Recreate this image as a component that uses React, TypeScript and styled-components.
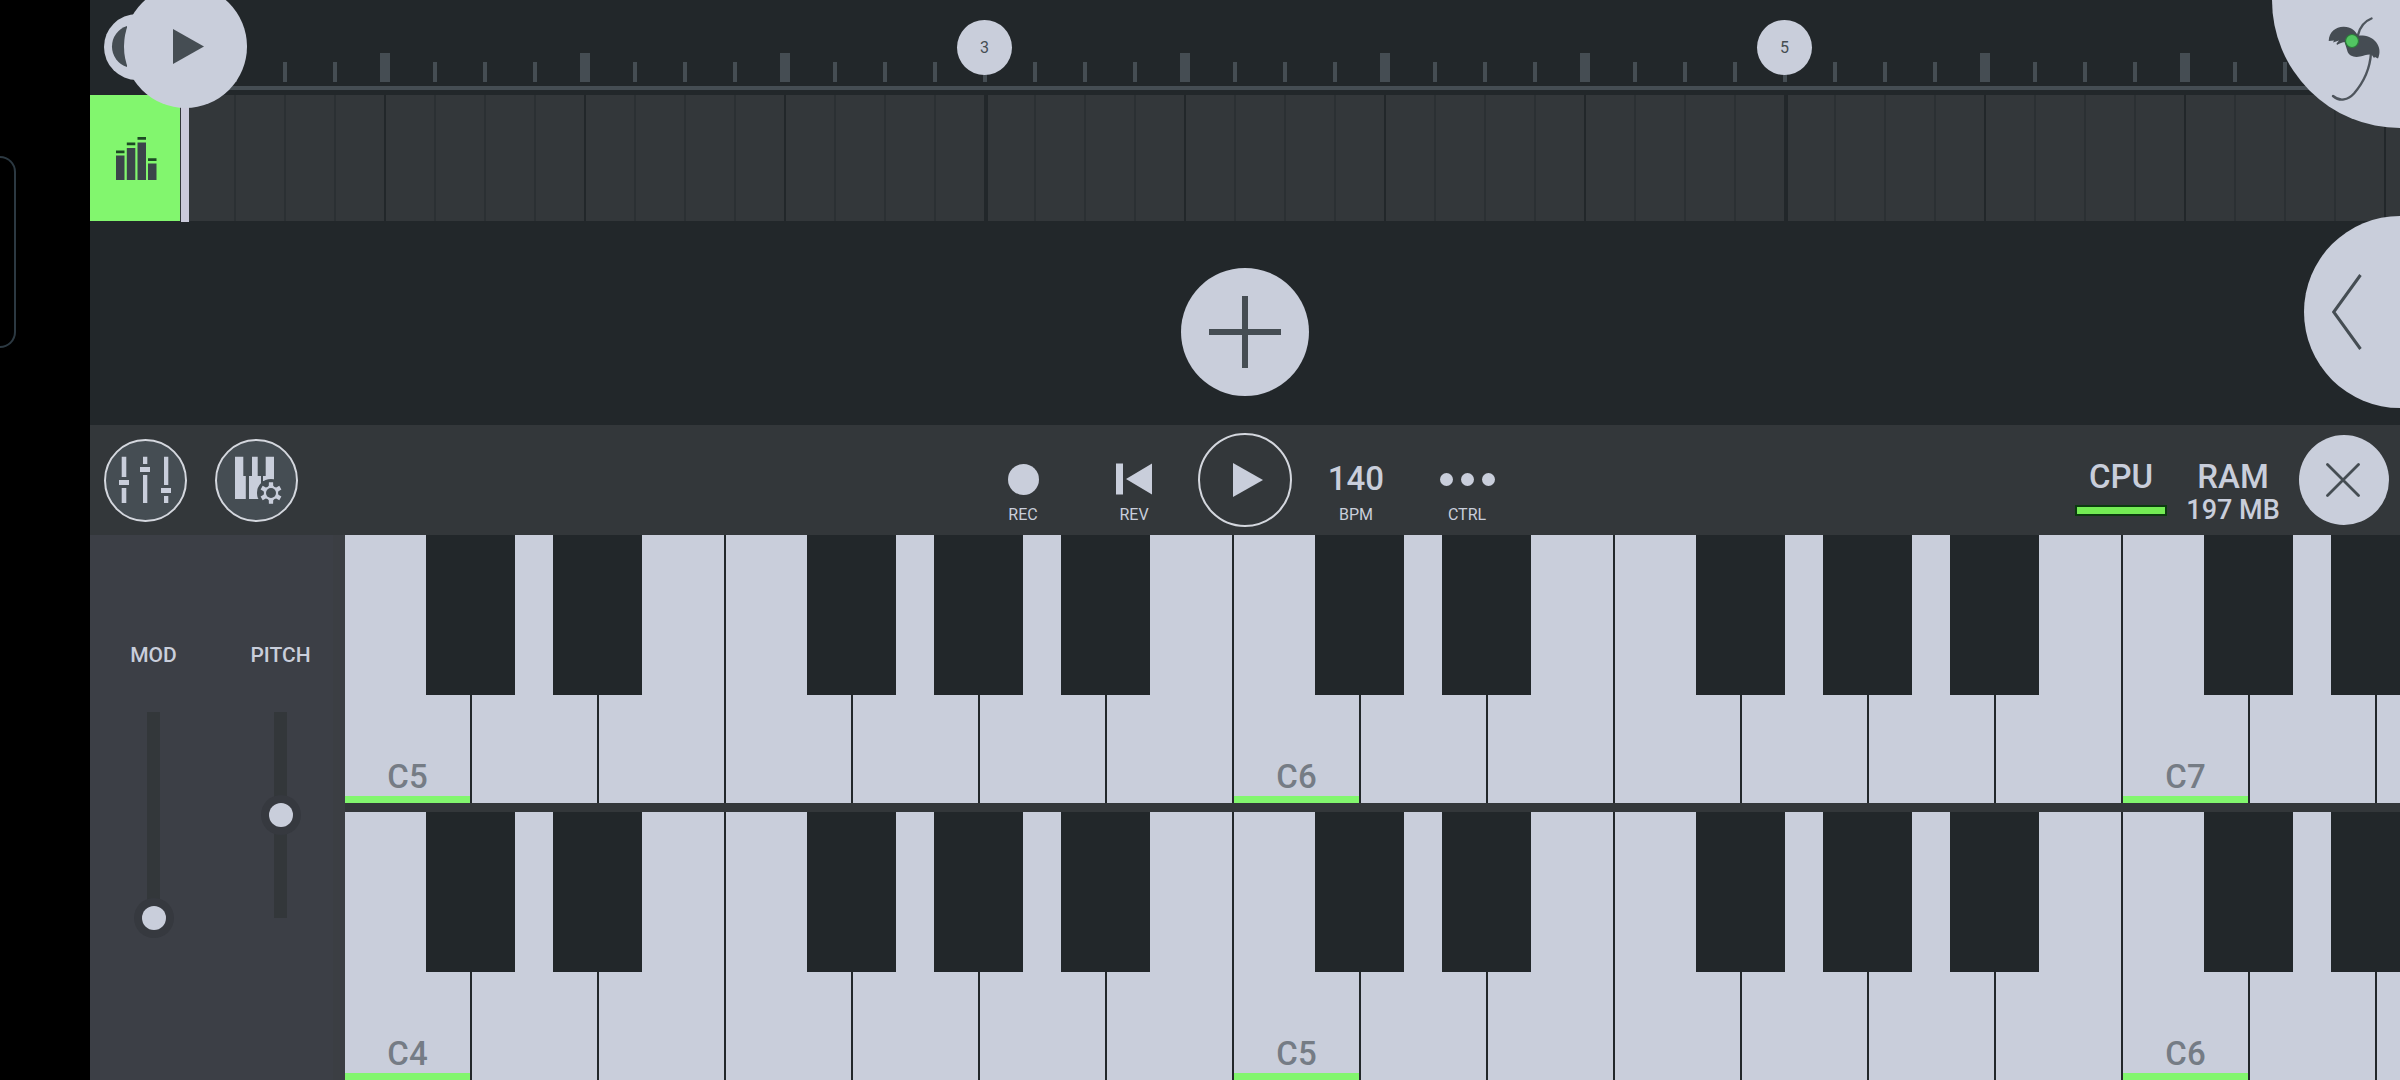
import React, { useState } from "react";
import styled, { createGlobalStyle, css } from "styled-components";

const color = {
  ink: "#22272a",
  surface: "#33373a",
  panel: "#3c3f46",
  light: "#c9cedb",
  steel: "#454d53",
  green: "#82f66e",
};

const GlobalStyle = createGlobalStyle`
  *, *::before, *::after { box-sizing: border-box; }
  body {
    margin: 0;
    background: #000;
    color: ${color.light};
    font-family: Roboto, "Noto Sans", sans-serif;
  }
  button {
    margin: 0;
    padding: 0;
    border: 0;
    background: none;
    color: inherit;
    font: inherit;
    cursor: pointer;
  }
  svg { display: block; }
`;

const Screen = styled.div`
  display: flex;
  min-height: 100vh;
  overflow: hidden;
`;

const Bezel = styled.aside`
  flex: none;
  width: 90px;
  padding-top: 156px;
  background: #000;
`;

const EdgeHandle = styled.div`
  width: 16px;
  height: 192px;
  border: 2px solid #2c3942;
  border-left: 0;
  border-radius: 0 16px 16px 0;
`;

const Workspace = styled.main`
  position: relative;
  display: flex;
  flex: 1;
  flex-direction: column;
  min-width: 0;
  overflow: hidden;
  background: ${color.ink};
`;

/* Timeline */

const Timeline = styled.section`
  position: relative;
`;

const Ruler = styled.div`
  display: flex;
  height: 90px;
  margin-bottom: 5px;
  margin-left: 95px;
  padding-bottom: 4px;
  border-bottom: 4px solid ${color.steel};
`;

const RulerStep = styled.div`
  position: relative;
  display: flex;
  flex: none;
  align-items: flex-end;
  width: 50px;
  margin-left: -2px;
  margin-right: 2px;
`;

const Tick = styled.span<{ $major: boolean }>`
  width: ${(p) => (p.$major ? 10 : 4)}px;
  height: ${(p) => (p.$major ? 29 : 20)}px;
  margin-left: ${(p) => (p.$major ? -3 : 0)}px;
  background: ${color.steel};
`;

const BarMarker = styled.button`
  position: absolute;
  top: 20px;
  left: -26px;
  width: 55px;
  height: 55px;
  border-radius: 50%;
  background: ${color.light};
  color: ${color.steel};
  font-size: 16px;
  line-height: 54px;
`;

const Track = styled.div`
  display: flex;
  height: 126px;
  overflow: hidden;
  background: ${color.surface};
`;

const TrackHead = styled.button`
  display: grid;
  flex: none;
  place-items: center;
  width: 90px;
  padding-left: 3px;
  background: ${color.green};
`;

const TrackSteps = styled.div`
  display: flex;
  padding-left: 4px;
`;

type LineKind = "bar" | "beat" | "step";

const TrackStep = styled.div<{ $kind: LineKind }>`
  flex: none;
  width: 50px;
  ${(p) =>
    p.$kind === "step"
      ? css`border-left: 2px solid #2b3033;`
      : css`border-left: ${p.$kind === "bar" ? 4 : 2}px solid ${color.ink};`}
`;

const Playhead = styled.div`
  position: absolute;
  top: 0;
  bottom: -1px;
  left: 91px;
  width: 8px;
  background: #cbcadb;
`;

const LoopButton = styled.button`
  position: absolute;
  top: 14px;
  left: 14px;
  width: 66px;
  height: 66px;
  border-radius: 50%;
  background: ${color.light};
`;

const PlayheadGrip = styled.button`
  position: absolute;
  top: -15px;
  left: 34px;
  display: grid;
  place-items: center;
  width: 123px;
  height: 123px;
  padding-left: 5px;
  border-radius: 50%;
  background: ${color.light};
`;

/* Floating corner controls */

const MenuCorner = styled.button`
  position: absolute;
  top: 0;
  right: 0;
  display: flex;
  justify-content: flex-end;
  width: 128px;
  height: 128px;
  padding: 15px 15px 0 0;
  border-bottom-left-radius: 100%;
  background: ${color.light};
`;

const DrawerTab = styled.button`
  position: absolute;
  top: 216px;
  right: 0;
  display: grid;
  place-items: center;
  width: 96px;
  height: 192px;
  padding-right: 10px;
  border-radius: 96px 0 0 96px;
  background: ${color.light};
`;

const EmptyLane = styled.section`
  display: flex;
  align-items: flex-start;
  justify-content: center;
  height: 204px;
  padding-top: 47px;
`;

const AddTrack = styled.button`
  display: grid;
  place-items: center;
  width: 128px;
  height: 128px;
  border-radius: 50%;
  background: ${color.light};
`;

/* Toolbar */

const Toolbar = styled.section`
  display: grid;
  grid-template-columns: 1fr auto 1fr;
  align-items: center;
  height: 110px;
  padding: 0 11px;
  background: ${color.surface};
`;

const ToolGroup = styled.div`
  display: flex;
  gap: 28px;
  padding-left: 3px;
`;

const RoundTool = styled.button`
  width: 83px;
  height: 83px;
  border: 2px solid #d4d7de;
  border-radius: 50%;
  background: ${color.steel};
`;

const Transport = styled.div`
  display: grid;
  grid-template-columns: repeat(5, 111px);
`;

const TransportButton = styled.button`
  display: flex;
  flex-direction: column;
  gap: 5px;
  align-items: center;
  height: 110px;
  padding-top: 33px;
  font-weight: 500;
`;

const TransportFace = styled.span`
  display: grid;
  place-items: center;
  height: 42px;
  font-size: 33px;
  line-height: 42px;
`;

const TransportLabel = styled.span`
  font-size: 16px;
  font-weight: 400;
  line-height: 20px;
`;

const PlayButton = styled.button`
  display: grid;
  place-items: center;
  place-self: center;
  width: 94px;
  height: 94px;
  padding-left: 5px;
  border: 2px solid #d4d7de;
  border-radius: 50%;
`;

const Status = styled.div`
  display: flex;
  align-items: center;
  justify-content: flex-end;
`;

const Stat = styled.div`
  display: flex;
  flex-direction: column;
  align-items: center;
  width: 112px;
  height: 110px;
  padding-top: 35px;
  font-weight: 500;
`;

const StatName = styled.span`
  font-size: 33px;
  line-height: 34px;
`;

const StatValue = styled.span`
  display: flex;
  align-items: center;
  height: 32px;
  font-size: 27px;
  line-height: 32px;
  white-space: nowrap;
`;

const LoadBar = styled.span`
  width: 92px;
  height: 11px;
  border: 2px solid #0c3a10;
  background: #74ec54;
`;

const CloseButton = styled.button`
  display: grid;
  place-items: center;
  width: 90px;
  height: 90px;
  margin-left: 10px;
  padding-right: 3px;
  border-radius: 50%;
  background: ${color.light};
`;

/* Instrument */

const Instrument = styled.section`
  display: flex;
  flex: 1;
  min-height: 0;
`;

const WheelPanel = styled.div`
  display: grid;
  flex: none;
  grid-template-columns: 127px 127px;
  width: 255px;
  padding-top: 107px;
  background: ${color.panel};
  box-shadow: inset -12px 0 #3b3e43;
`;

const Wheel = styled.div`
  display: flex;
  flex-direction: column;
  gap: 32px;
  align-items: center;
`;

const WheelLabel = styled.label`
  font-size: 21px;
  font-weight: 500;
  line-height: 26px;
`;

const WheelInput = styled.input`
  appearance: none;
  writing-mode: vertical-lr;
  direction: rtl;
  width: 24px;
  height: 230px;
  margin: 0;
  background: linear-gradient(${color.surface}, ${color.surface}) center / 13px 206px no-repeat;
  cursor: pointer;

  &::-webkit-slider-thumb {
    appearance: none;
    width: 24px;
    height: 24px;
    border-radius: 50%;
    background: ${color.light};
    box-shadow: 0 0 0 8px #36393f;
  }
`;

const Keyboards = styled.div`
  display: grid;
  flex: 1;
  grid-template-rows: 1fr 1fr;
  gap: 9px;
  min-width: 0;
  background: ${color.surface};
`;

const Keyboard = styled.div`
  display: flex;
  min-width: 0;
  min-height: 268px;
  overflow: hidden;
`;

const KeySlot = styled.div`
  position: relative;
  display: flex;
  flex: none;
  width: 127px;
  border-right: 2px solid ${color.ink};
`;

const WhiteKey = styled.button<{ $root: boolean }>`
  display: flex;
  flex: 1;
  align-items: flex-end;
  justify-content: center;
  padding-bottom: ${(p) => (p.$root ? 2 : 9)}px;
  border-bottom: ${(p) => (p.$root ? `7px solid ${color.green}` : "0")};
  background: ${color.light};
  color: #757c85;
  font-size: 33px;
  font-weight: 500;
  line-height: 34px;
`;

const BlackKey = styled.button`
  position: absolute;
  z-index: 1;
  top: 0;
  left: 81px;
  width: 89px;
  height: 160px;
  background: ${color.ink};
`;

/* Icons */

const PlayIcon = ({ fill, width, height }: { fill: string; width: number; height: number }) => (
  <svg width={width} height={height} viewBox="0 0 30 34" preserveAspectRatio="none" aria-hidden="true">
    <path d="M0 0L30 17L0 34Z" fill={fill} />
  </svg>
);

const MoonIcon = () => (
  <svg width="66" height="66" viewBox="0 0 66 66" aria-hidden="true">
    <path d="M23 12A21.5 21.5 0 0 0 23 53Z" fill={color.steel} />
  </svg>
);

const LevelsIcon = () => (
  <svg width="41" height="43" viewBox="0 0 41 43" aria-hidden="true">
    <path
      d="M0 18.5h8.5V43H0zM10.8 11h8.5v32h-8.5zM21.5 5.5H30V43h-8.5zM32 26.5h8.5V43H32z"
      fill="#3b444a"
    />
    <path
      d="M0 13.5h8.5v2.8H0zM10.8 5.5h8.5v2.8h-8.5zM21.5 0H30v2.8h-8.5zM32 21.3h8.5v2.8H32z"
      fill="#1d4a24"
    />
  </svg>
);

const PalmIcon = () => (
  <svg width="60" height="90" viewBox="0 0 60 90" aria-hidden="true">
    <path
      d="M46.5 3.5C40 6 35 12 33 20M46 38C45 54 38 68 29 78.5C23 85 15 87 8 81"
      fill="none"
      stroke="#4e555d"
      strokeWidth="2.4"
      strokeLinecap="round"
    />
    <path
      d="M3.7 26C4 17 11 11.5 19 11.8C26 12 30 15.500 33 20.5C40 20 47 21.5 51 27C55 32 55.5 38 53 43.500L50 42L49 43L46.5 39.5C42 39 39 40.5 35 41.5C29 43 24 40.5 22.5 36.5C21.5 33 20.5 30 19.5 27C16.5 27.5 14 28.5 12 30L11.5 28.5L14 25.5L8 27.5L9 25.5Z"
      fill="#454c53"
    />
    <circle cx="27" cy="26" r="6.5" fill="#52c562" stroke="#2c7a3b" strokeWidth="1.2" />
  </svg>
);

const ChevronIcon = () => (
  <svg width="30" height="78" viewBox="0 0 30 78" aria-hidden="true">
    <path d="M28.5 2L1.7 39L28.5 76" fill="none" stroke={color.steel} strokeWidth="3" />
  </svg>
);

const PlusIcon = () => (
  <svg width="72" height="72" viewBox="0 0 72 72" aria-hidden="true">
    <path d="M0 36H72M36 0V72" stroke={color.steel} strokeWidth="6" />
  </svg>
);

const FadersIcon = () => (
  <svg width="79" height="79" viewBox="2 2 79 79" aria-hidden="true">
    <path
      d="M17.7 17.7h4.6V38h-4.6zM15 41h10v5H15zM17.7 49h4.6v15h-4.6zM39 17.7h4.3V25H39zM36 28h10v5H36zM39 36h4.3v28H39zM60 17.7h4.3V46H60zM57 49h10v5H57zM60 57h4.3v7H60z"
      fill={color.light}
    />
  </svg>
);

const GEAR_OUTLINE = Array.from({ length: 6 }, (_, tooth) =>
  [
    [-30, 7],
    [-17, 7.6],
    [-11, 11],
    [11, 11],
    [17, 7.6],
  ]
    .map(([offset, radius]) => {
      const angle = ((tooth * 60 + offset - 90) * Math.PI) / 180;
      return `${(56 + radius * Math.cos(angle)).toFixed(2)},${(54 + radius * Math.sin(angle)).toFixed(2)}`;
    })
    .join(" "),
).join(" ");

const KeySettingsIcon = () => (
  <svg width="79" height="79" viewBox="2 2 79 79" aria-hidden="true">
    <path
      d="M20 17.7h8.3V37h2.5v23H20zM37 17.7h5.7V37h3.3v23H34V37h3zM50.7 17.7H59V42H48v-5h2.7z"
      fill={color.light}
    />
    <circle cx="56" cy="54" r="14" fill={color.steel} />
    <polygon points={GEAR_OUTLINE} fill={color.light} />
    <circle cx="56" cy="54" r="5" fill={color.steel} />
  </svg>
);

const RecordIcon = () => (
  <svg width="31" height="31" viewBox="0 0 31 31" aria-hidden="true">
    <circle cx="15.5" cy="15.5" r="15.5" fill={color.light} />
  </svg>
);

const RewindIcon = () => (
  <svg width="36" height="32" viewBox="0 0 36 32" aria-hidden="true">
    <path d="M0 .5h7v31H0zM36 .5v31L10 16z" fill={color.light} />
  </svg>
);

const DotsIcon = () => (
  <svg width="55" height="13" viewBox="0 0 55 13" aria-hidden="true">
    {[6.5, 27.5, 48.5].map((x) => (
      <circle key={x} cx={x} cy="6.5" r="6.5" fill={color.light} />
    ))}
  </svg>
);

const CrossIcon = () => (
  <svg width="34" height="34" viewBox="0 0 34 34" aria-hidden="true">
    <path
      d="M1.5 1.5L32.5 32.5M32.5 1.5L1.5 32.5"
      stroke={color.steel}
      strokeWidth="2.8"
      strokeLinecap="round"
    />
  </svg>
);

/* Data */

const STEPS = Array.from({ length: 45 }, (_, i) => i);
const MARKERS: Record<number, string> = { 16: "3", 32: "5" };
const WHITE_KEYS = Array.from({ length: 17 }, (_, i) => i);

const lineKind = (step: number): LineKind =>
  step % 16 === 0 ? "bar" : step % 4 === 0 ? "beat" : "step";

const hasSharp = (degree: number) => degree !== 2 && degree !== 6;

function PianoRow({ octave }: { octave: number }) {
  return (
    <Keyboard>
      {WHITE_KEYS.map((key) => {
        const degree = key % 7;
        const name = "CDEFGAB"[degree];
        const currentOctave = octave + Math.floor(key / 7);
        return (
          <KeySlot key={key}>
            <WhiteKey $root={degree === 0} aria-label={`${name}${currentOctave}`}>
              {degree === 0 && `${name}${currentOctave}`}
            </WhiteKey>
            {hasSharp(degree) && <BlackKey aria-label={`${name}♯${currentOctave}`} />}
          </KeySlot>
        );
      })}
    </Keyboard>
  );
}

function WheelControl({ id, label, initial }: { id: string; label: string; initial: number }) {
  const [value, setValue] = useState(initial);
  return (
    <Wheel>
      <WheelLabel htmlFor={id}>{label}</WheelLabel>
      <WheelInput
        id={id}
        type="range"
        min={0}
        max={100}
        value={value}
        onChange={(e) => setValue(Number(e.target.value))}
      />
    </Wheel>
  );
}

export default function App() {
  return (
    <>
      <GlobalStyle />
      <Screen>
        <Bezel>
          <EdgeHandle />
        </Bezel>
        <Workspace>
          <Timeline>
            <Ruler>
              {STEPS.map((step) => (
                <RulerStep key={step}>
                  <Tick $major={lineKind(step) === "beat"} />
                  {MARKERS[step] && <BarMarker>{MARKERS[step]}</BarMarker>}
                </RulerStep>
              ))}
            </Ruler>
            <Track>
              <TrackHead aria-label="Instrument track">
                <LevelsIcon />
              </TrackHead>
              <TrackSteps>
                {STEPS.map((step) => (
                  <TrackStep key={step} $kind={lineKind(step)} />
                ))}
              </TrackSteps>
            </Track>
            <Playhead />
            <LoopButton aria-label="Loop">
              <MoonIcon />
            </LoopButton>
            <PlayheadGrip aria-label="Play from here">
              <PlayIcon fill={color.steel} width={31} height={35} />
            </PlayheadGrip>
          </Timeline>

          <EmptyLane>
            <AddTrack aria-label="Add track">
              <PlusIcon />
            </AddTrack>
          </EmptyLane>

          <Toolbar>
            <ToolGroup>
              <RoundTool aria-label="Mixer">
                <FadersIcon />
              </RoundTool>
              <RoundTool aria-label="Keyboard settings">
                <KeySettingsIcon />
              </RoundTool>
            </ToolGroup>
            <Transport>
              <TransportButton>
                <TransportFace>
                  <RecordIcon />
                </TransportFace>
                <TransportLabel>REC</TransportLabel>
              </TransportButton>
              <TransportButton>
                <TransportFace>
                  <RewindIcon />
                </TransportFace>
                <TransportLabel>REV</TransportLabel>
              </TransportButton>
              <PlayButton aria-label="Play">
                <PlayIcon fill={color.light} width={30} height={34} />
              </PlayButton>
              <TransportButton>
                <TransportFace>140</TransportFace>
                <TransportLabel>BPM</TransportLabel>
              </TransportButton>
              <TransportButton>
                <TransportFace>
                  <DotsIcon />
                </TransportFace>
                <TransportLabel>CTRL</TransportLabel>
              </TransportButton>
            </Transport>
            <Status>
              <Stat>
                <StatName>CPU</StatName>
                <StatValue>
                  <LoadBar />
                </StatValue>
              </Stat>
              <Stat>
                <StatName>RAM</StatName>
                <StatValue>197 MB</StatValue>
              </Stat>
              <CloseButton aria-label="Close">
                <CrossIcon />
              </CloseButton>
            </Status>
          </Toolbar>

          <Instrument>
            <WheelPanel>
              <WheelControl id="mod" label="MOD" initial={0} />
              <WheelControl id="pitch" label="PITCH" initial={50} />
            </WheelPanel>
            <Keyboards>
              <PianoRow octave={5} />
              <PianoRow octave={4} />
            </Keyboards>
          </Instrument>

          <MenuCorner aria-label="Main menu">
            <PalmIcon />
          </MenuCorner>
          <DrawerTab aria-label="Open side panel">
            <ChevronIcon />
          </DrawerTab>
        </Workspace>
      </Screen>
    </>
  );
}
